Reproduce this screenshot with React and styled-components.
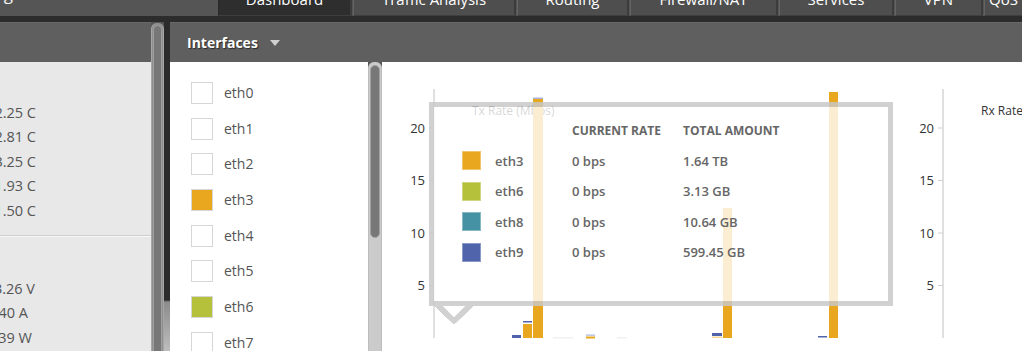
import React from 'react'
import styled, { createGlobalStyle } from 'styled-components'

const GlobalStyle = createGlobalStyle`
  html, body {
    margin: 0;
    padding: 0;
    background: #555;
  }
  body {
    font-family: "Open Sans", "Liberation Sans", sans-serif;
    overflow: hidden;
  }
`

const tabs = [
  { name: 'Dashboard', width: 134, active: true },
  { name: 'Traffic Analysis', width: 163 },
  { name: 'Routing', width: 112 },
  { name: 'Firewall/NAT', width: 148 },
  { name: 'Services', width: 115 },
  { name: 'VPN', width: 88 },
  { name: 'QoS', width: 80, left: true },
]

const sensors = [
  [
    { v: '42.25 C', end: 36 },
    { v: '52.81 C', end: 36 },
    { v: '43.25 C', end: 36 },
    { v: '41.93 C', end: 36 },
    { v: '41.50 C', end: 36 },
  ],
  [
    { v: '13.26 V', end: 35 },
    { v: '0.40 A', end: 28 },
    { v: '18.39 W', end: 32 },
  ],
]

const ifaces = [
  { name: 'eth0' },
  { name: 'eth1' },
  { name: 'eth2' },
  { name: 'eth3', color: '#e8a71e' },
  { name: 'eth4' },
  { name: 'eth5' },
  { name: 'eth6', color: '#b5c13a' },
  { name: 'eth7' },
]

const legend = [
  { name: 'eth3', color: '#e8a71e', rate: '0 bps', total: '1.64 TB' },
  { name: 'eth6', color: '#b5c13a', rate: '0 bps', total: '3.13 GB' },
  { name: 'eth8', color: '#4492a4', rate: '0 bps', total: '10.64 GB' },
  { name: 'eth9', color: '#4f64aa', rate: '0 bps', total: '599.45 GB' },
]

const ORANGE = '#e8a71e'
const BLUE = '#4f64aa'

// bars of the tx chart (svg coords)
const txBars = [
  { x: 130, w: 9, y: 273, h: 3, c: BLUE },
  { x: 141, w: 9, y: 262, h: 14, c: ORANGE },
  { x: 141, w: 9, y: 259, h: 1.5, c: BLUE },
  { x: 151, w: 10, y: 37, h: 239, c: ORANGE },
  { x: 151, w: 10, y: 35.5, h: 1.5, c: '#aab4d8' },
  { x: 171, w: 20, y: 275.5, h: 0.8, c: '#e4e4e4' },
  { x: 204, w: 9, y: 274.5, h: 2, c: ORANGE },
  { x: 204, w: 9, y: 272.5, h: 1.2, c: '#aab4d8' },
  { x: 235, w: 10, y: 275.5, h: 0.8, c: '#e4e4e4' },
  { x: 330, w: 10, y: 271, h: 3, c: BLUE },
  { x: 330, w: 10, y: 274.5, h: 1.5, c: '#f6d89a' },
  { x: 341, w: 9, y: 146, h: 130, c: ORANGE },
  { x: 436, w: 9, y: 274, h: 1.5, c: BLUE },
  { x: 447, w: 9, y: 30, h: 246, c: ORANGE },
]

const ticks = [20, 15, 10, 5]
const yOf = (v) => 276 - v * 10.5

const Axis = ({ x, title }) => (
  <g>
    <line x1={x} y1={27} x2={x} y2={276} stroke="#d6d6d6" strokeWidth="1.5" />
    {ticks.map((t) => (
      <g key={t}>
        <line x1={x - 5} y1={yOf(t)} x2={x} y2={yOf(t)} stroke="#cfcfcf" />
        <text x={x - 9} y={yOf(t) + 4.5} textAnchor="end" fontSize="13" fill="#333">
          {t}
        </text>
      </g>
    ))}
    <text x={x + 38} y={53} fontSize="12" fill="#333">
      {title}
    </text>
  </g>
)

const App = () => {
  return (
    <Page>
      <GlobalStyle />
      <TopNav>
        <Brand><span>Routing</span></Brand>
        {tabs.map((t) => (
          <Tab key={t.name} $w={t.width} $active={t.active} $left={t.left}>
            <TabLabel>{t.name}</TabLabel>
          </Tab>
        ))}
      </TopNav>

      <Body>
        <LeftCol>
          <PanelHeader />
          <LeftContent>
            {sensors.map((group, gi) => (
              <SensorGroup key={gi} $first={gi === 0}>
                {group.map((s) => (
                  <SensorRow key={s.v} $end={s.end}>
                    <span>{s.v}</span>
                  </SensorRow>
                ))}
              </SensorGroup>
            ))}
          </LeftContent>
        </LeftCol>

        <Scroll $dark>
          <Thumb $dark $top={2} $height={400} />
        </Scroll>
        <Divider />

        <MainCol>
          <PanelHeader>
            <HeaderTitle>Interfaces</HeaderTitle>
            <Caret />
          </PanelHeader>
          <MainRow>
            <IfaceList>
              {ifaces.map((i) => (
                <IfaceRow key={i.name}>
                  <Check $color={i.color} />
                  <IfaceName>{i.name}</IfaceName>
                </IfaceRow>
              ))}
            </IfaceList>

            <Scroll>
              <Thumb $top={3} $height={173} />
            </Scroll>

            <ChartPanel>
              <svg width="640" height="289" viewBox="0 0 640 289">
                <Axis x={52} title="Tx Rate (Mbps)" />
                {txBars.map((b, k) => (
                  <rect key={k} x={b.x} y={b.y} width={b.w} height={b.h} fill={b.c} />
                ))}
                <Axis x={561} title="Rx Rate (Mbps)" />
              </svg>

              <Tooltip>
                <LegendGrid>
                  <span />
                  <span />
                  <ColHead>Current Rate</ColHead>
                  <ColHead>Total Amount</ColHead>
                  {legend.map((l) => (
                    <React.Fragment key={l.name}>
                      <Swatch $color={l.color} />
                      <Cell>{l.name}</Cell>
                      <Cell>{l.rate}</Cell>
                      <Cell>{l.total}</Cell>
                    </React.Fragment>
                  ))}
                </LegendGrid>
              </Tooltip>
            </ChartPanel>
          </MainRow>
        </MainCol>
      </Body>
    </Page>
  )
}

export default App

const Page = styled.div`
width: 1022px;
height: 351px;
overflow: hidden;
display: flex;
flex-direction: column;
background: #555;
`

const TopNav = styled.div`
height: 16px;
flex-shrink: 0;
display: flex;
background: #555;
border-bottom: 6px solid #2c2c2c;
overflow: hidden;
`

const Brand = styled.div`
width: 13px;
margin-right: 205px;
display: flex;
justify-content: flex-end;
white-space: nowrap;
color: #f2f2f2;
font-size: 17px;
line-height: 16px;
span{
    display: block;
    margin-top: -14px;
}
`

const Tab = styled.div`
width: ${(p) => p.$w}px;
flex-shrink: 0;
box-sizing: border-box;
height: 16px;
margin-right: 1px;
background: ${(p) => (p.$active ? '#2e2e2e' : '#4e4e4e')};
border-left: 1px solid ${(p) => (p.$active ? '#2a2a2a' : '#646464')};
border-right: 2px solid #3c3c3c;
border-bottom: 1px solid #3f3f3f;
overflow: hidden;
color: #fff;
text-align: ${(p) => (p.$left ? 'left' : 'center')};
padding-left: ${(p) => (p.$left ? '4px' : '0')};
font-size: 15px;
`

const TabLabel = styled.div`
line-height: 22px;
margin-top: -12px;
white-space: nowrap;
`

const Body = styled.div`
flex: 1;
display: flex;
min-height: 0;
`

const LeftCol = styled.div`
width: 151px;
flex-shrink: 0;
display: flex;
flex-direction: column;
`

const PanelHeader = styled.div`
height: 40px;
flex-shrink: 0;
box-sizing: border-box;
background: #5f5f5f;
border-top: 1px solid #686868;
display: flex;
align-items: center;
padding-left: 17px;
`

const HeaderTitle = styled.div`
color: #fff;
font-weight: 700;
font-size: 14px;
text-shadow: 1px 1px 1px #2a2a2a;
`

const Caret = styled.div`
width: 0;
height: 0;
margin-left: 12px;
margin-top: 1px;
border-left: 5px solid transparent;
border-right: 5px solid transparent;
border-top: 6px solid #d0d0d0;
`

const LeftContent = styled.div`
flex: 1;
background: #e8e8e8;
overflow: hidden;
`

const SensorGroup = styled.div`
padding-top: ${(p) => (p.$first ? '37.75px' : '39.75px')};
padding-bottom: ${(p) => (p.$first ? '12.75px' : '0')};
border-top: ${(p) => (p.$first ? 'none' : '1px solid #cfcfcf')};
box-shadow: ${(p) => (p.$first ? 'none' : 'inset 0 1px 0 #f7f7f7')};
`

const SensorRow = styled.div`
width: ${(p) => p.$end}px;
height: 24.5px;
display: flex;
align-items: center;
justify-content: flex-end;
white-space: nowrap;
font-size: 14.5px;
color: #555;
`

const Scroll = styled.div`
width: ${(p) => (p.$dark ? '13px' : '14px')};
flex-shrink: 0;
box-sizing: border-box;
background: ${(p) => (p.$dark ? '#8f8f8f' : '#cbcbcb')};
border-left: 1px solid ${(p) => (p.$dark ? '#a6a6a6' : '#bdbdbd')};
border-right: 1px solid ${(p) => (p.$dark ? '#a6a6a6' : '#bdbdbd')};
border-radius: 6px 6px 0 0;
padding: 0 1px;
margin-top: ${(p) => (p.$dark ? '1px' : '0')};
`

const Thumb = styled.div`
margin-top: ${(p) => p.$top}px;
height: ${(p) => p.$height}px;
box-sizing: border-box;
background: #777;
border: 1px solid ${(p) => (p.$dark ? '#9e9e9e' : '#a2a2a2')};
border-radius: 5px;
`

const Divider = styled.div`
width: 6px;
flex-shrink: 0;
background: linear-gradient(to bottom, #2b2b2b 0, #2b2b2b 278px, #8c8c8c 280px, #bdbdbd 100%);
`

const MainCol = styled.div`
flex: 1;
display: flex;
flex-direction: column;
min-width: 0;
`

const MainRow = styled.div`
flex: 1;
display: flex;
min-height: 0;
`

const IfaceList = styled.div`
width: 198px;
flex-shrink: 0;
box-sizing: border-box;
background: #fff;
padding: 20px 0 0 21px;
overflow: hidden;
`

const IfaceRow = styled.div`
height: 22px;
margin-bottom: 13.7px;
display: flex;
align-items: center;
`

const Check = styled.div`
width: 22px;
height: 22px;
box-sizing: border-box;
border: 1px solid #d6d6d6;
background: ${(p) => p.$color || '#fff'};
`

const IfaceName = styled.div`
margin-left: 11px;
margin-top: -1px;
font-size: 14px;
color: #555;
`

const ChartPanel = styled.div`
flex: 1;
position: relative;
background: #fff;
overflow: hidden;
svg{
    display: block;
    font-family: "Open Sans", "Liberation Sans", sans-serif;
}
`

const Tooltip = styled.div`
position: absolute;
left: 47px;
top: 40px;
width: 464px;
height: 204px;
box-sizing: border-box;
border: 5px solid rgba(0, 0, 0, 0.18);
background: rgba(255, 255, 255, 0.8);
::before{
    content: '';
    position: absolute;
    left: 1px;
    top: 100%;
    margin-top: 5px;
    border-left: 19px solid transparent;
    border-right: 19px solid transparent;
    border-top: 18px solid #d1d1d1;
}
::after{
    content: '';
    position: absolute;
    left: 8.5px;
    top: 100%;
    margin-top: 5px;
    border-left: 11.5px solid transparent;
    border-right: 11.5px solid transparent;
    border-top: 11px solid #fff;
}
`

const LegendGrid = styled.div`
display: grid;
grid-template-columns: 33px 77px 111px auto;
grid-auto-rows: 30.5px;
align-items: center;
padding: 7.75px 0 0 28px;
`

const ColHead = styled.div`
font-size: 12px;
font-weight: 700;
text-transform: uppercase;
color: #666;
white-space: nowrap;
`

const Swatch = styled.div`
width: 19px;
height: 19px;
box-sizing: border-box;
background: ${(p) => p.$color};
border: 1px solid rgba(255, 255, 255, 0.35);
`

const Cell = styled.div`
font-size: 13px;
font-weight: 600;
color: #666;
white-space: nowrap;
`
